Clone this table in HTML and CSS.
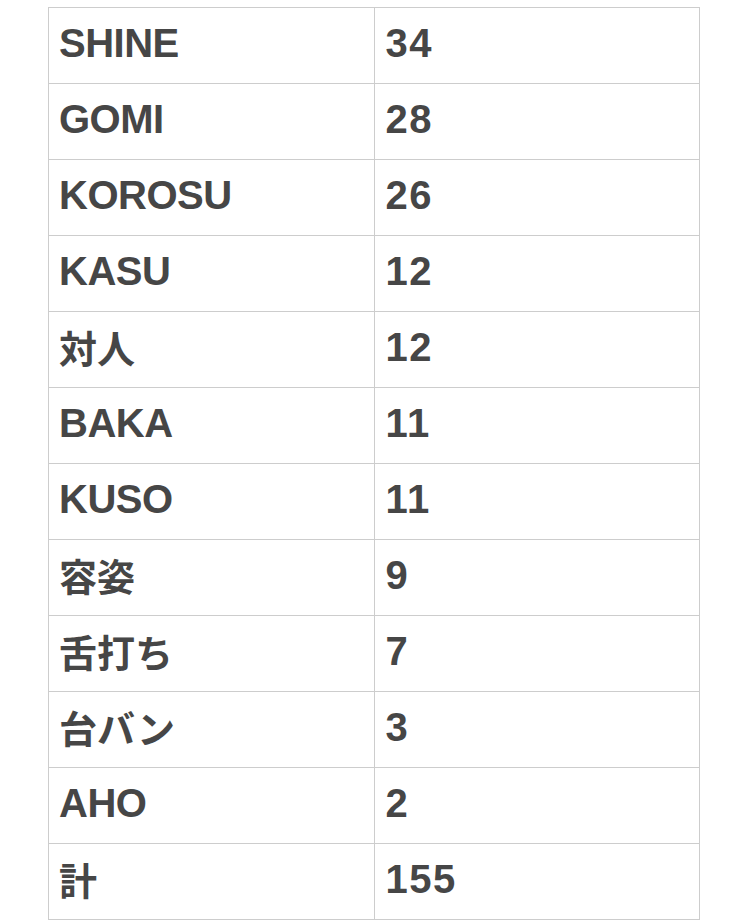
FILE: index.html
```html
<!DOCTYPE html>
<html lang="ja">
<head>
<meta charset="utf-8">
<link rel="stylesheet" href="styles.css">
</head>
<body>
<table class="tally">
  <colgroup><col class="col-word"><col class="col-count"></colgroup>
  <tbody>
    <tr><td>SHINE</td><td class="num">34</td></tr>
    <tr><td>GOMI</td><td class="num">28</td></tr>
    <tr><td>KOROSU</td><td class="num">26</td></tr>
    <tr><td>KASU</td><td class="num">12</td></tr>
    <tr><td class="ja">対人</td><td class="num">12</td></tr>
    <tr><td>BAKA</td><td class="num">11</td></tr>
    <tr><td>KUSO</td><td class="num">11</td></tr>
    <tr><td class="ja">容姿</td><td class="num">9</td></tr>
    <tr><td class="ja">舌打ち</td><td class="num">7</td></tr>
    <tr><td class="ja">台バン</td><td class="num">3</td></tr>
    <tr><td>AHO</td><td class="num">2</td></tr>
    <tr><td class="ja">計</td><td class="num">155</td></tr>
  </tbody>
</table>
</body>
</html>
```

FILE: styles.css
```css
html, body {
  margin: 0;
  padding: 0;
  background: #ffffff;
}

body {
  padding: 7px 0 0 48px;
}

.tally {
  border-collapse: collapse;
  table-layout: fixed;
  width: 652px;
  font-family: "Liberation Sans", "Noto Sans CJK JP", sans-serif;
  font-weight: 700;
  font-size: 40px;
  line-height: 40px;
  letter-spacing: -0.5px;
  color: #464646;
}

.col-word,
.col-count {
  width: 50%;
}

.tally td {
  border: 1px solid #cdcdcd;
  padding: 15px 10px 20px 10px;
  height: 40px;
  vertical-align: top;
  white-space: nowrap;
}

.tally td.num {
  padding-left: 11px;
  letter-spacing: 1.5px;
}

.tally td.ja {
  font-family: "Noto Sans CJK JP", sans-serif;
  font-size: 38px;
  letter-spacing: 0;
}
```
